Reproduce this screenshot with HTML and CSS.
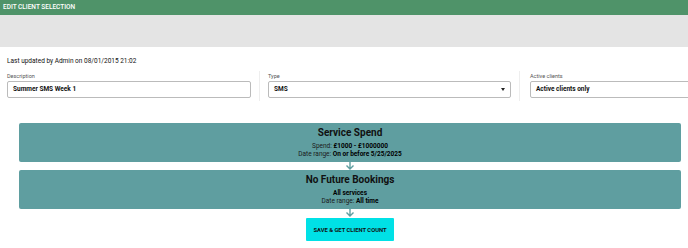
FILE: index.html
```html
<!DOCTYPE html>
<html lang="en">
<head>
    <meta charset="UTF-8">
    <title>Edit Client Selection</title>
    <link rel="stylesheet" href="styles.css">
</head>
<body>
    <div class="header">EDIT CLIENT SELECTION</div>
    <div class="toolbar"></div>

    <p class="meta">Last updated by Admin on 08/01/2015 21:02</p>

    <div class="fields">
        <div class="field">
            <label>Description</label>
            <div class="input">Summer SMS Week 1</div>
        </div>
        <div class="field">
            <label>Type</label>
            <div class="input select">SMS <span class="caret"></span></div>
        </div>
        <div class="field">
            <label>Active clients</label>
            <div class="input">Active clients only</div>
        </div>
    </div>

    <div class="flow">
        <div class="card">
            <h3>Service Spend</h3>
            <p>Spend: <strong>£1000 - £1000000</strong></p>
            <p>Date range: <strong>On or before 5/25/2025</strong></p>
        </div>
        <div class="connector">
            <svg width="10" height="8" viewBox="0 0 10 8"><path d="M5 0 V7 M1.5 3.5 L5 7 L8.5 3.5" fill="none" stroke="#5f9ea0" stroke-width="1.4"/></svg>
        </div>
        <div class="card">
            <h3>No Future Bookings</h3>
            <p><strong>All services</strong></p>
            <p>Date range: <strong>All time</strong></p>
        </div>
        <div class="connector">
            <svg width="10" height="8" viewBox="0 0 10 8"><path d="M5 0 V7 M1.5 3.5 L5 7 L8.5 3.5" fill="none" stroke="#5f9ea0" stroke-width="1.4"/></svg>
        </div>
        <button class="save">SAVE &amp; GET CLIENT COUNT</button>
    </div>
</body>
</html>
```
FILE: styles.css
```css
:root {
    --header-green: #4f9369;
    --toolbar-grey: #e4e4e4;
    --card-teal: #5f9ea0;
    --button-cyan: #00e1e6;
    --text-color: #111;
}

* {
    box-sizing: border-box;
    margin: 0;
    padding: 0;
}

body {
    font-family: Roboto, 'Liberation Sans', sans-serif;
    color: var(--text-color);
    background: #fff;
    overflow: hidden;
}

.header {
    height: 15px;
    line-height: 15px;
    padding-left: 3px;
    background-color: var(--header-green);
    color: #fff;
    font-size: 6.5px;
    font-weight: 500;
}

.toolbar {
    height: 32px;
    background-color: var(--toolbar-grey);
}

.meta {
    padding: 8px 7px 0;
    font-size: 6.5px;
    line-height: 12px;
}

.fields {
    display: grid;
    grid-template-columns: 260px 260px 260px;
    width: 100%;
    overflow: hidden;
    margin-top: 4px;
}

.field {
    padding: 2px 8px 3px 7px;
    border-right: 1px solid #eee;
}

.field + .field {
    padding-left: 8px;
}

.field:last-child {
    padding-left: 10px;
    border-right: none;
}

.field label {
    display: block;
    font-size: 5.5px;
    color: #555;
    line-height: 6px;
}

.input {
    margin-top: 2px;
    height: 17px;
    line-height: 15px;
    padding: 0 5px;
    border: 1px solid #bbb;
    border-radius: 2px;
    font-size: 6.5px;
    font-weight: bold;
}

.select {
    display: flex;
    justify-content: space-between;
    align-items: center;
}

.caret {
    width: 0;
    height: 0;
    border-left: 2.5px solid transparent;
    border-right: 2.5px solid transparent;
    border-top: 3px solid #222;
}

.flow {
    display: flex;
    flex-direction: column;
    align-items: center;
    margin: 22px 7px 0 19px;
}

.card {
    width: 100%;
    background-color: var(--card-teal);
    border-radius: 2px;
    text-align: center;
    padding: 3px 0 4px;
    font-size: 6.5px;
    line-height: 8px;
    color: #1a1a1a;
}

.card h3 {
    font-size: 10px;
    line-height: 14px;
    margin-bottom: 2px;
    color: #111;
}

.card strong {
    color: #000;
}

.connector {
    height: 8px;
    display: flex;
    align-items: center;
}

.save {
    margin-top: 1px;
    width: 88px;
    height: 23px;
    border: none;
    border-radius: 1px;
    background-color: var(--button-cyan);
    font-family: inherit;
    font-size: 5.8px;
    font-weight: bold;
    color: #111;
}
```
